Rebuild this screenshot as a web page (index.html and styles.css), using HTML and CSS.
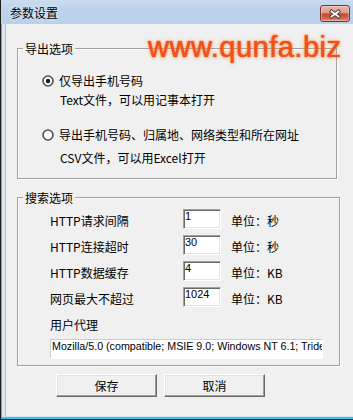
FILE: index.html
```html
<!DOCTYPE html>
<html lang="zh-CN">
<head>
<meta charset="utf-8">
<title>参数设置</title>
<link rel="stylesheet" href="styles.css">
</head>
<body>
<div class="window">
  <div class="titlebar">
    <span class="title">参数设置</span>
    <button class="close" aria-label="关闭">
      <svg width="14" height="10" viewBox="0 0 14 10"><path d="M3.5 2.5 L10.5 7.5 M10.5 2.5 L3.5 7.5" stroke="#3a3a3a" stroke-width="3.6" stroke-linecap="square" fill="none"/><path d="M3.5 2.5 L10.5 7.5 M10.5 2.5 L3.5 7.5" stroke="#fff" stroke-width="1.8" stroke-linecap="square" fill="none"/></svg>
    </button>
  </div>
  <div class="frame">
    <div class="client">
      <fieldset class="group g1">
        <legend>导出选项</legend>
        <div class="option">
          <div class="radio-row">
            <svg class="radio" width="12" height="12" viewBox="0 0 12 12"><circle cx="6" cy="6" r="5" fill="#fafafa" stroke="#505050" stroke-width="1.6"/><circle cx="6" cy="6" r="2.2" fill="#1c1c1c"/></svg>
            <span>仅导出手机号码</span>
          </div>
          <div class="desc">Text文件，可以用记事本打开</div>
        </div>
        <div class="option opt2">
          <div class="radio-row">
            <svg class="radio" width="12" height="12" viewBox="0 0 12 12"><circle cx="6" cy="6" r="5" fill="#fafafa" stroke="#505050" stroke-width="1.6"/></svg>
            <span>导出手机号码、归属地、网络类型和所在网址</span>
          </div>
          <div class="desc">CSV文件，可以用Excel打开</div>
        </div>
      </fieldset>
      <fieldset class="group g2">
        <legend>搜索选项</legend>
        <div class="field-row"><span class="label">HTTP请求间隔</span><input class="num" value="1"><span class="unit">单位：秒</span></div>
        <div class="field-row"><span class="label">HTTP连接超时</span><input class="num" value="30"><span class="unit">单位：秒</span></div>
        <div class="field-row"><span class="label">HTTP数据缓存</span><input class="num" value="4"><span class="unit">单位：KB</span></div>
        <div class="field-row"><span class="label">网页最大不超过</span><input class="num" value="1024"><span class="unit">单位：KB</span></div>
        <div class="ua-label">用户代理</div>
        <input class="ua" value="Mozilla/5.0 (compatible; MSIE 9.0; Windows NT 6.1; Trident/5.0)">
      </fieldset>
      <div class="buttons">
        <button class="btn">保存</button>
        <button class="btn">取消</button>
      </div>
    </div>
  </div>
  <div class="watermark">www.qunfa.biz</div>
</div>
</body>
</html>
```
FILE: styles.css
```css
html, body {
  margin: 0;
  padding: 0;
}
body {
  width: 353px;
  height: 420px;
  overflow: hidden;
  background: #f0f0f0;
  font-family: "Noto Sans CJK SC", sans-serif;
  font-size: 12px;
  color: #000;
}
.window {
  position: relative;
  width: 353px;
  height: 420px;
  box-sizing: border-box;
  display: flex;
  flex-direction: column;
  border-left: 1px solid #1e1e1e;
  border-bottom: 1px solid #1e1e1e;
  background: #c3d8ee;
}
.titlebar {
  height: 24px;
  flex: none;
  display: flex;
  align-items: flex-start;
  justify-content: space-between;
  padding: 0 3px 0 9px;
  background: linear-gradient(#cbdcf0, #bdd3ec 40%, #b9d1ea);
}
.title {
  margin-top: 6px;
  line-height: 14px;
  text-shadow: 0 0 4px rgba(255, 255, 255, 0.9);
}
.close {
  margin-top: 5px;
  width: 30px;
  height: 17px;
  box-sizing: border-box;
  padding: 0;
  display: flex;
  align-items: center;
  justify-content: center;
  border: 1px solid #74352c;
  border-radius: 3px;
  background: linear-gradient(#ebb5a8 0%, #e09b8c 45%, #c84a33 52%, #cf5a42 75%, #df8a6c 100%);
  box-shadow: inset 0 0 0 1px rgba(255, 255, 255, 0.35);
}
.frame {
  flex: 1;
  display: flex;
  flex-direction: column;
  border-left: 1px solid #3ac2ee;
  border-bottom: 2px solid #3ac2ee;
  padding-left: 3px;
  background: #d9e8f6;
}
.client {
  flex: 1;
  background: #f0f0f0;
  border-left: 1px solid #a3c4e4;
  border-bottom: 1px solid #d3e4f3;
  padding: 17px 0 0 11px;
  display: flex;
  flex-direction: column;
  align-items: flex-start;
}
.group {
  margin: 0;
  box-sizing: border-box;
  min-inline-size: 0;
  border: 1px solid #a0a0a0;
  box-shadow: inset 1px 1px 0 #fff, 1px 1px 0 #fff;
}
.group legend {
  margin-left: 5px;
  padding: 0 2px;
  line-height: 15px;
  background: #f0f0f0;
}
.g1 {
  width: 320px;
  padding: 17px 0 12px;
}
.g2 {
  width: 323px;
  margin-top: 11px;
  padding: 4px 0 6px;
}
.option {
  margin-left: 24px;
}
.opt2 {
  margin-top: 19px;
}
.radio-row {
  display: flex;
  align-items: center;
  gap: 5px;
  height: 16px;
  line-height: 16px;
  white-space: nowrap;
}
.radio {
  flex: none;
}
.desc {
  margin: 3px 0 0 18px;
  line-height: 16px;
}
.opt2 .desc {
  margin-top: 7px;
}
.field-row {
  display: flex;
  align-items: flex-start;
  height: 20px;
  margin-left: 32px;
}
.field-row + .field-row {
  margin-top: 6px;
}
.label {
  width: 133px;
  padding-top: 4px;
  line-height: 16px;
}
.unit {
  margin-left: 10px;
  padding-top: 4px;
  line-height: 16px;
}
.num {
  width: 38px;
  height: 20px;
  box-sizing: border-box;
  margin: 0;
  padding: 0 0 6px 1px;
  border: 1px solid;
  border-color: #a0a0a0 #fff #fff #a0a0a0;
  box-shadow: inset 1px 1px 0 #696969, inset -1px -1px 0 #e3e3e3;
  background: #fff;
  color: #000;
  font: 11px "Liberation Sans", Arial, sans-serif;
  outline: none;
}
.ua-label {
  margin: 10px 0 0 32px;
  line-height: 16px;
}
.ua {
  margin: 6px 0 0 32px;
  width: 273px;
  height: 20px;
  box-sizing: border-box;
  padding: 0 0 6px 1px;
  border: 1px solid;
  border-color: #cdcdcd #fff #fff #cdcdcd;
  background: #fff;
  color: #000;
  font: 10.7px "Liberation Sans", Arial, sans-serif;
  outline: none;
}
.buttons {
  display: flex;
  gap: 7px;
  margin: 8px 0 0 39px;
}
.btn {
  width: 101px;
  height: 23px;
  box-sizing: border-box;
  padding: 0;
  font: 12px/15px "Noto Sans CJK SC", sans-serif;
  color: #000;
  background: #f0f0f0;
  border: 1px solid;
  border-color: #fff #696969 #696969 #fff;
  box-shadow: inset -1px -1px 0 #a0a0a0, inset 1px 1px 0 #e3e3e3;
}
.watermark {
  position: absolute;
  left: 147px;
  top: 32px;
  font: 29px/30px "Liberation Sans", Arial, sans-serif;
  letter-spacing: 0.5px;
  color: #f0501a;
  text-shadow: 0 0 1px #f0501a, 0 0 2px rgba(255, 130, 60, 0.9), 0 0 4px rgba(255, 150, 80, 0.7);
  white-space: nowrap;
  pointer-events: none;
}
```
